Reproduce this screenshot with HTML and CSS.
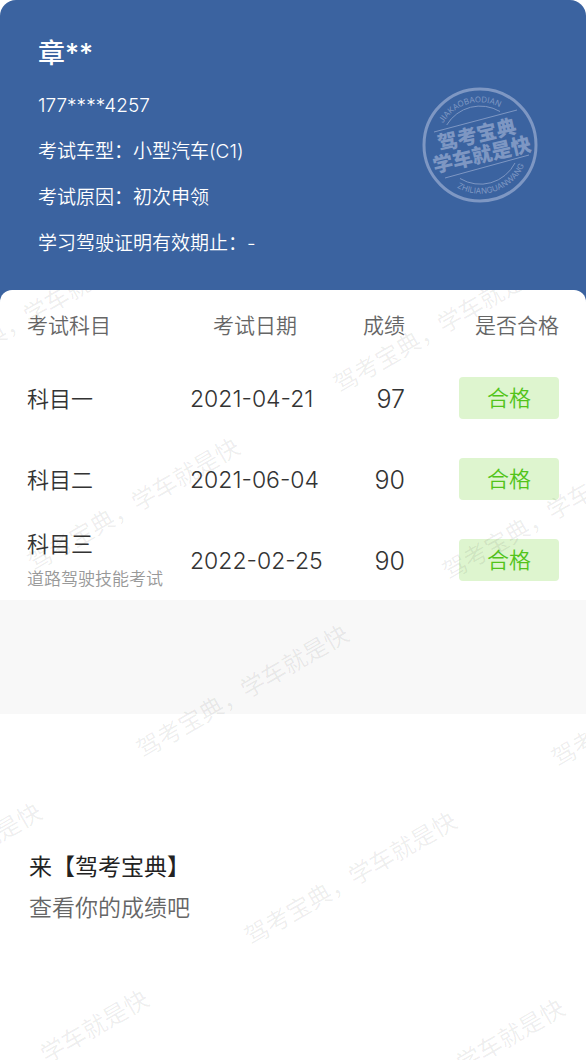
FILE: index.html
```html
<!DOCTYPE html>
<html lang="zh-CN">
<head>
    <meta charset="utf-8">
    <meta name="viewport" content="width=device-width, initial-scale=1">
    <title>驾考宝典</title>
    <link rel="stylesheet" href="styles.css">
</head>
<body>
    <div class="page">
        <header class="profile">
            <div class="info">
                <h1 class="name">章**</h1>
                <p>177****4257</p>
                <p>考试车型：小型汽车(C1)</p>
                <p>考试原因：初次申领</p>
                <p>学习驾驶证明有效期止：-</p>
            </div>
            <svg class="seal" viewBox="0 0 116 116" aria-hidden="true">
                <defs>
                    <path id="arc-top" d="M21 36.5A42.5 42.5 0 0 1 90.6 30.7"/>
                    <path id="arc-bottom" d="M34.8 100.6A48.5 48.5 0 0 0 104.5 72.5"/>
                </defs>
                <circle cx="58" cy="58" r="56" stroke-width="3"/>
                <path d="M24.7 38A39 39 0 0 1 78 24.5M38 91.5A39 39 0 0 0 93 76"/>
                <path d="M12 45L95 23M23 91L107 68"/>
                <text class="seal-small"><textPath href="#arc-top">JIAKAOBAODIAN</textPath></text>
                <text class="seal-small"><textPath href="#arc-bottom">ZHILIANGUANWANG</textPath></text>
                <text class="seal-big" transform="translate(55 48) rotate(-13)" y="7">驾考宝典</text>
                <text class="seal-big" transform="translate(60 68) rotate(-13)" y="7">学车就是快</text>
            </svg>
        </header>

        <main class="sheet">
            <table class="scores">
                <thead>
                    <tr>
                        <th class="subject">考试科目</th>
                        <th class="date">考试日期</th>
                        <th class="score">成绩</th>
                        <th class="result">是否合格</th>
                    </tr>
                </thead>
                <tbody>
                    <tr>
                        <td class="subject">科目一</td>
                        <td class="date">2021-04-21</td>
                        <td class="score">97</td>
                        <td class="result"><span class="badge">合格</span></td>
                    </tr>
                    <tr>
                        <td class="subject">科目二</td>
                        <td class="date">2021-06-04</td>
                        <td class="score">90</td>
                        <td class="result"><span class="badge">合格</span></td>
                    </tr>
                    <tr>
                        <td class="subject">科目三<small>道路驾驶技能考试</small></td>
                        <td class="date">2022-02-25</td>
                        <td class="score">90</td>
                        <td class="result"><span class="badge">合格</span></td>
                    </tr>
                </tbody>
            </table>
            <div class="divider"></div>
            <section class="promo">
                <h2>来【驾考宝典】</h2>
                <p>查看你的成绩吧</p>
            </section>

            <!-- watermark, clipped by the sheet -->
            <svg class="watermark" aria-hidden="true">
                <text transform="translate(-74 95) rotate(-30)">驾考宝典，学车就是快</text>
                <text transform="translate(340 104) rotate(-30)">驾考宝典，学车就是快</text>
                <text transform="translate(34 282) rotate(-30)">驾考宝典，学车就是快</text>
                <text transform="translate(449 291) rotate(-30)">驾考宝典，学车就是快</text>
                <text transform="translate(143 469) rotate(-30)">驾考宝典，学车就是快</text>
                <text transform="translate(558 478) rotate(-30)">驾考宝典，学车就是快</text>
                <text transform="translate(-164 647) rotate(-30)">驾考宝典，学车就是快</text>
                <text transform="translate(251 656) rotate(-30)">驾考宝典，学车就是快</text>
                <text transform="translate(-57 834) rotate(-30)">驾考宝典，学车就是快</text>
                <text transform="translate(359 843) rotate(-30)">驾考宝典，学车就是快</text>
            </svg>
        </main>
    </div>
</body>
</html>
```
FILE: styles.css
```css
* {
    box-sizing: border-box;
}
body {
    margin: 0;
    background: #fff;
    color: #333;
    font-family: Inter, "Noto Sans CJK SC", sans-serif;
    font-weight: 300;
}
h1, h2, p {
    margin: 0;
}
.page {
    display: flex;
    flex-direction: column;
    min-height: 100vh;
    background: #3b63a0;
    border-radius: 16px 16px 0 0;
}

/* blue card */
.profile {
    display: flex;
    justify-content: space-between;
    align-items: flex-start;
    padding: 25px 48px 23px 38px;
    color: #fff;
}
.info p {
    font-size: 19px;
    font-weight: 350;
    line-height: 46px;
}
.info .name {
    font-size: 27px;
    font-weight: 500;
    line-height: 58px;
}
.seal {
    width: 116px;
    height: 116px;
    margin-top: 62px;
    fill: none;
    stroke: #7e97c3;
}
.seal text {
    fill: #7e97c3;
    stroke: none;
}
.seal-small {
    font-size: 8px;
    font-weight: 400;
}
.seal-big {
    font-size: 20px;
    font-weight: 900;
    text-anchor: middle;
}

/* white sheet with the results */
.sheet {
    position: relative;
    flex: 1;
    overflow: hidden;
    background: #fff;
    border-radius: 12px 12px 0 0;
}
.scores {
    width: 100%;
    table-layout: fixed;
    border-collapse: collapse;
}
.scores th, .scores td {
    padding: 0;
    text-align: left;
    white-space: nowrap;
}
.scores th {
    height: 67px;
    font-size: 21px;
    font-weight: 350;
    color: #666;
}
.scores td {
    height: 81px;
    padding-top: 2px;
    font-size: 22px;
}
.scores .subject {
    width: 190px;
    padding-left: 27px;
}
.scores td.subject {
    font-weight: 350;
    line-height: 36px;
}
.scores .date {
    width: 130px;
}
.scores td.date {
    font-size: 23px;
}
.scores th.date {
    text-align: center;
}
.scores .score {
    width: 85px;
    text-align: right;
}
.scores td.score {
    font-size: 25px;
}
.scores .result {
    padding-top: 0;
    padding-right: 27px;
    text-align: right;
}
.subject small {
    display: block;
    font-size: 17px;
    line-height: 34px;
    color: #999;
}
.badge {
    display: inline-block;
    width: 100px;
    border-radius: 4px;
    background: #def5cf;
    color: #52c41a;
    font-weight: 350;
    line-height: 42px;
    text-align: center;
    vertical-align: middle;
}
.divider {
    height: 114px;
    background: #f8f8f8;
}
.promo {
    padding: 133px 29px;
    font-size: 23px;
    font-weight: 350;
    line-height: 41px;
    color: #666;
}
.promo h2 {
    font-size: 23px;
    font-weight: 400;
    color: #222;
}
.watermark {
    position: absolute;
    top: 0;
    left: 0;
    width: 100%;
    height: 100%;
    pointer-events: none;
    fill: rgba(0, 0, 0, 0.07);
    font-size: 24px;
    font-weight: 400;
}
```
